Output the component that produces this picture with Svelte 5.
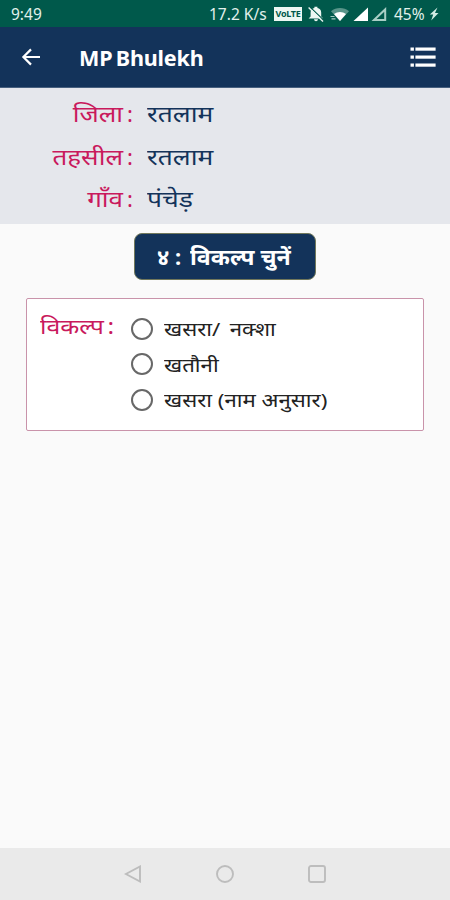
<script lang="ts">
	const details = [
		{ label: 'जिला', value: 'रतलाम' },
		{ label: 'तहसील', value: 'रतलाम' },
		{ label: 'गाँव', value: 'पंचेड़' }
	];

	const options = [
		{ id: 'khasra', label: 'खसरा/ नक्शा' },
		{ id: 'khatauni', label: 'खतौनी' },
		{ id: 'khasra-name', label: 'खसरा (नाम अनुसार)' }
	];

	let selected = $state('');
</script>

<div class="screen">
	<div class="status-bar">
		<span class="clock">9:49</span>
		<span class="speed">17.2 K/s</span>
		<span class="volte">VoLTE</span>
		<svg class="bell" width="18" height="18" viewBox="0 0 18 18">
			<path
				d="M1.6 13.6L3.6 11.4V7.5C3.6 4.9 5.2 3.3 7.4 2.9V1.8H10.4V2.9C12.7 3.3 14.2 4.9 14.2 7.5V11.4L16.2 13.6ZM7 14.2H11C10.8 16.8 7.2 16.8 7 14.2Z"
				fill="#edf7f3"
			/>
			<path d="M2.6 1.6L17 15.4" stroke="#00594b" stroke-width="1.2" />
			<path d="M1.6 2.6L16 16.4" stroke="#edf7f3" stroke-width="1.4" />
		</svg>
		<svg class="wifi" width="20" height="16" viewBox="0 0 20 16">
			<path d="M1 5.2C6 1 14 1 19 5.2L10 15Z" fill="#59958a" />
			<path d="M4 8C7.5 5.2 12.5 5.2 16 8L10 15Z" fill="#ffffff" />
			<path d="M0.5 10.5H4.5M1.5 12.8H5.5" stroke="#a5cbc2" stroke-width="1.2" fill="none" />
		</svg>
		<svg class="signal" width="15" height="15" viewBox="0 0 15 15">
			<path d="M15 0.5V14H0.5Z" fill="#ffffff" />
		</svg>
		<svg class="signal" width="16" height="15" viewBox="0 0 16 15">
			<path d="M14.2 2.4V13H3Z" fill="none" stroke="#a9cec5" stroke-width="2" />
		</svg>
		<span class="battery">45%</span>
		<svg class="bolt" width="10" height="16" viewBox="0 0 10 16">
			<path d="M8.5 1.5L0.8 8.4H4.2L2.2 14.5L9.5 7H6Z" fill="#d3ebe4" />
		</svg>
	</div>

	<header class="app-bar">
		<button class="icon-button" aria-label="Back">
			<svg width="20" height="20" viewBox="0 0 20 20" fill="none" stroke="#ffffff" stroke-width="2.2">
				<path d="M19 10H3M10 2.4L2.4 10L10 17.6" />
			</svg>
		</button>
		<h1>MP Bhulekh</h1>
		<button class="icon-button menu" aria-label="Menu">
			<svg width="26" height="22" viewBox="0 0 26 22" fill="#ffffff">
				{#each [1.5, 9.5, 17.5] as y}
					<rect x="0.5" {y} width="3.4" height="3.2" />
					<rect x="5.4" {y} width="20.2" height="3.2" />
				{/each}
			</svg>
		</button>
	</header>

	<section class="details">
		{#each details as row}
			<div class="row">
				<span class="label">{row.label}</span>
				<span class="colon">:</span>
				<span class="value">{row.value}</span>
			</div>
		{/each}
	</section>

	<main>
		<h2><span>४ :</span><span class="choose">विकल्प चुनें</span></h2>

		<div class="card">
			<div class="card-label"><span>विकल्प</span><span class="card-colon">:</span></div>
			<div class="options">
				{#each options as option}
					<label>
						<input type="radio" name="record" value={option.id} bind:group={selected} />
						<span>{option.label}</span>
					</label>
				{/each}
			</div>
		</div>
	</main>

	<nav class="nav-bar">
		<svg width="18" height="18" viewBox="0 0 18 18">
			<path d="M16 1.5V16.5L1.9 9Z" />
		</svg>
		<svg width="18" height="18" viewBox="0 0 18 18">
			<circle cx="9" cy="9" r="8" />
		</svg>
		<svg width="18" height="18" viewBox="0 0 18 18">
			<rect x="1" y="1" width="16" height="16" rx="2" />
		</svg>
	</nav>
</div>

<style>
	:global(body) {
		margin: 0;
	}

	.screen {
		display: flex;
		flex-direction: column;
		height: 900px;
		background: #fafafa;
		font-family: 'Noto Sans', sans-serif;
	}

	.status-bar {
		display: flex;
		align-items: center;
		flex: none;
		height: 27px;
		padding: 1px 11px 0 11px;
		box-sizing: border-box;
		background: #00594b;
		color: #e2f1ec;
		font-size: 15.5px;
		white-space: nowrap;
	}

	.clock {
		margin-right: auto;
	}

	.speed {
		width: 59px;
	}

	.volte {
		width: 28px;
		height: 14px;
		margin-left: 6px;
		background: #edf7f3;
		color: #00594b;
		font-size: 9px;
		font-weight: 700;
		line-height: 14px;
		text-align: center;
		letter-spacing: -0.3px;
	}

	.bell {
		margin-left: 5px;
	}

	.wifi {
		margin-left: 5px;
	}

	.signal {
		margin-left: 3px;
	}

	.battery {
		width: 31px;
		margin-left: 7px;
	}

	.bolt {
		margin-left: 4px;
	}

	.app-bar {
		display: flex;
		align-items: center;
		flex: none;
		height: 61px;
		padding: 0 14px 0 21px;
		box-sizing: border-box;
		background: #13335a;
		border-bottom: 1px solid #47607f;
	}

	.icon-button {
		display: flex;
		padding: 0;
		border: 0;
		background: none;
	}

	h1 {
		margin: 0 auto 0 38px;
		color: #ffffff;
		font-size: 22px;
		font-weight: 700;
		letter-spacing: -0.2px;
		word-spacing: -2px;
		transform: scaleX(0.98);
		transform-origin: left;
	}

	.details {
		flex: none;
		height: 136px;
		padding-top: 4px;
		box-sizing: border-box;
		background: #e5e7ec;
		font-size: 22px;
	}

	.row {
		display: flex;
		height: 42.5px;
		line-height: 42px;
	}

	/* widen Devanagari by scaling: letter-spacing would split the headline stroke */
	.label {
		width: 123px;
		color: #c9195c;
		text-align: right;
		transform: scaleX(1.18);
		transform-origin: right;
	}

	.colon {
		width: 20px;
		padding-left: 4px;
		color: #c9195c;
	}

	.value {
		color: #13335a;
		transform: scaleX(1.2);
		transform-origin: left;
	}

	main {
		flex: 1;
		padding: 9px 26px 0;
	}

	h2 {
		display: flex;
		gap: 9px;
		width: 158px;
		height: 45px;
		margin: 0 auto;
		padding-left: 22px;
		border: 1px solid #71785b;
		border-radius: 8px;
		background: #13335a;
		color: #ffffff;
		font-size: 22px;
		font-weight: 700;
		line-height: 45px;
		white-space: nowrap;
	}

	.choose {
		transform: scaleX(1.05);
		transform-origin: left;
	}

	.card {
		display: flex;
		height: 133px;
		margin-top: 18px;
		padding: 11px 0 0 13px;
		box-sizing: border-box;
		border: 1px solid #c993aa;
		border-radius: 2px;
		background: #ffffff;
	}

	.card-label {
		display: flex;
		width: 91px;
		height: 32px;
		color: #c9195c;
		font-size: 21px;
		line-height: 32px;
		transform: scaleX(1.18);
		transform-origin: left;
	}

	.card-colon {
		margin-left: 3px;
	}

	.options {
		padding-top: 1px;
	}

	label {
		display: flex;
		align-items: center;
		height: 35.5px;
		color: #222222;
		font-size: 18.5px;
		white-space: nowrap;
	}

	label span {
		transform: scaleX(1.2);
		transform-origin: left;
	}

	label:first-child span {
		word-spacing: 3px;
	}

	input {
		appearance: none;
		width: 22px;
		height: 22px;
		margin: 0 11px 0 0;
		border: 2px solid #686868;
		border-radius: 50%;
	}

	input:checked {
		background: radial-gradient(#c9195c 45%, transparent 50%);
	}

	.nav-bar {
		display: flex;
		align-items: center;
		justify-content: center;
		gap: 74px;
		flex: none;
		height: 52px;
		background: #eaeaea;
	}

	.nav-bar svg {
		fill: none;
		stroke: #bdbdbd;
		stroke-width: 1.9;
	}
</style>
